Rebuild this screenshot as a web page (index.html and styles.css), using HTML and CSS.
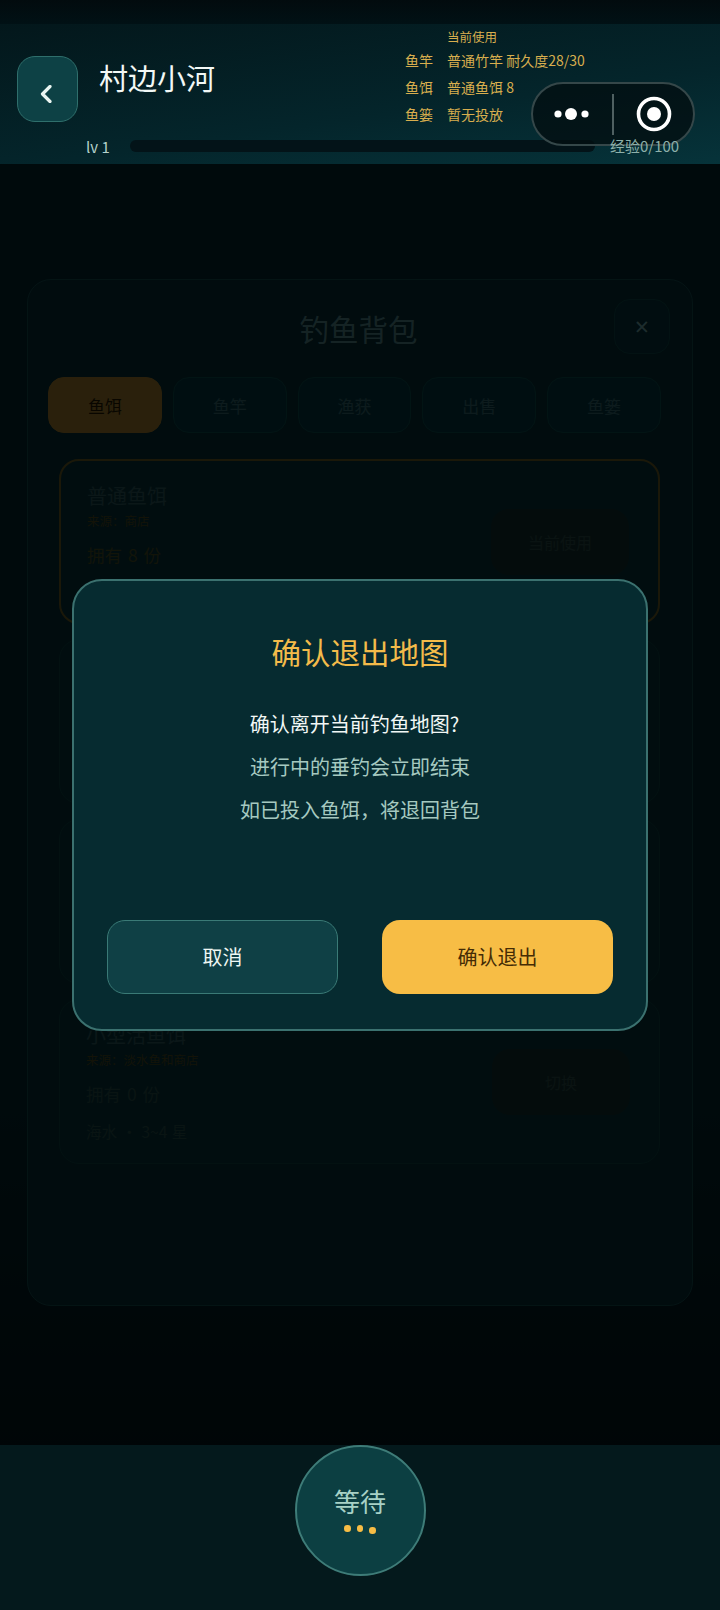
FILE: index.html
```html
<!DOCTYPE html>
<html lang="zh-CN">
<head>
    <meta charset="UTF-8">
    <meta name="viewport" content="width=device-width, initial-scale=1.0">
    <title>村边小河</title>
    <link rel="stylesheet" href="styles.css">
</head>
<body>
    <div class="page">
        <div class="status-gap"></div>

        <!-- Header -->
        <header class="map-header">
            <div class="header-row">
                <button class="back-btn">
                    <svg width="14" height="18" viewBox="0 0 14 18"><path d="M11 1.5 L3.5 9 L11 16.5" fill="none" stroke="#e9f5f1" stroke-width="3.2" stroke-linecap="round" stroke-linejoin="round"/></svg>
                </button>
                <h1 class="map-name">村边小河</h1>
                <div class="gear-info">
                    <span></span><span class="gear-head">当前使用</span>
                    <span>鱼竿</span><span>普通竹竿 耐久度28/30</span>
                    <span>鱼饵</span><span>普通鱼饵 8</span>
                    <span>鱼篓</span><span>暂无投放</span>
                </div>
            </div>
            <div class="exp-row">
                <span class="level">lv 1</span>
                <div class="exp-bar"></div>
                <span class="exp-text">经验0/100</span>
            </div>
            <div class="capsule">
                <svg class="capsule-dots" width="40" height="14" viewBox="0 0 40 14">
                    <circle cx="6" cy="7" r="3.6" fill="#fff"/>
                    <circle cx="19" cy="7" r="6" fill="#fff"/>
                    <circle cx="33" cy="7" r="3.6" fill="#fff"/>
                </svg>
                <span class="capsule-line"></span>
                <svg class="capsule-target" width="38" height="38" viewBox="0 0 38 38">
                    <circle cx="19" cy="19" r="15.5" fill="none" stroke="#fff" stroke-width="3.6"/>
                    <circle cx="19" cy="19" r="7" fill="#fff"/>
                </svg>
            </div>
        </header>

        <!-- Backpack with dialog on top -->
        <main class="map-main">
            <section class="bag">
                <h2 class="bag-title">钓鱼背包</h2>
                <button class="bag-close">×</button>
                <div class="bag-tabs">
                    <button class="bag-tab active">鱼饵</button>
                    <button class="bag-tab">鱼竿</button>
                    <button class="bag-tab">渔获</button>
                    <button class="bag-tab">出售</button>
                    <button class="bag-tab">鱼篓</button>
                </div>
                <div class="bag-list">
                    <div class="bait-card current">
                        <div class="bait-text">
                            <div class="bait-name">普通鱼饵</div>
                            <div class="bait-source">来源：商店</div>
                            <div class="bait-count">拥有 8 份</div>
                        </div>
                        <button class="bait-btn">当前使用</button>
                    </div>
                    <div class="bait-card"></div>
                    <div class="bait-card"></div>
                    <div class="bait-card">
                        <div class="bait-text">
                            <div class="bait-name">小型活鱼饵</div>
                            <div class="bait-source">来源：淡水鱼和商店</div>
                            <div class="bait-count">拥有 0 份</div>
                            <div class="bait-desc">海水 · 3~4 星</div>
                        </div>
                        <button class="bait-btn">切换</button>
                    </div>
                </div>
            </section>

            <div class="overlay">
                <div class="dialog">
                    <h3 class="dialog-title">确认退出地图</h3>
                    <p class="dialog-line first">确认离开当前钓鱼地图?</p>
                    <p class="dialog-line">进行中的垂钓会立即结束</p>
                    <p class="dialog-line">如已投入鱼饵，将退回背包</p>
                    <div class="dialog-btns">
                        <button class="dialog-btn cancel">取消</button>
                        <button class="dialog-btn confirm">确认退出</button>
                    </div>
                </div>
            </div>
        </main>

        <!-- Footer -->
        <footer class="map-footer">
            <button class="wait-btn">
                <span class="wait-text">等待</span>
                <span class="wait-dots"><i></i><i></i><i></i></span>
            </button>
        </footer>
    </div>
</body>
</html>
```

FILE: styles.css
```css
/* General Styling */
* {
    margin: 0;
    padding: 0;
    box-sizing: border-box;
}
html, body {
    height: 100%;
}
body {
    font-family: "Noto Sans CJK SC", "Noto Sans", sans-serif;
    background-color: #01090c;
    overflow: hidden;
}
button {
    font-family: inherit;
    border: none;
}
.page {
    display: flex;
    flex-direction: column;
    width: 720px;
    height: 1610px;
}
.status-gap {
    height: 24px;
    background: linear-gradient(180deg, #020b0e, #011115);
}

/* Header */
.map-header {
    position: relative;
    height: 140px;
    display: flex;
    flex-direction: column;
    background: linear-gradient(172deg, #03171b 0%, #04252b 60%, #06333a 100%);
    z-index: 2;
}
.header-row {
    height: 116px;
    display: flex;
    align-items: flex-start;
}
.back-btn {
    width: 61px;
    height: 66px;
    margin: 32px 0 0 17px;
    padding: 10px 3px 0 0;
    display: flex;
    align-items: center;
    justify-content: center;
    background-color: #0d4145;
    border: 1.5px solid #2f6f6c;
    border-radius: 18px;
}
.map-name {
    margin: 31px 0 0 21px;
    font-size: 29px;
    line-height: 44px;
    font-weight: 400;
    color: #f2f8f6;
}
.gear-info {
    margin-left: auto;
    width: 315px;
    padding-top: 2px;
    display: grid;
    grid-template-columns: 42px 1fr;
    grid-template-rows: 22.5px;
    grid-auto-rows: 27px;
    font-size: 14px;
    line-height: 22px;
    color: #d8ae4e;
}
.gear-head {
    font-size: 12.5px;
}
.exp-row {
    height: 12px;
    display: flex;
    align-items: center;
    padding-left: 86px;
}
.level {
    width: 44px;
    font-size: 15px;
    color: #b5d2cc;
}
.exp-bar {
    width: 465px;
    height: 12px;
    background-color: #031318;
    border-radius: 6px;
}
.exp-text {
    position: relative;
    top: -1px;
    z-index: 4;
    margin-left: 15px;
    font-size: 15px;
    color: #8db0aa;
}

/* Wechat capsule lies over the header */
.capsule {
    position: absolute;
    left: 531px;
    top: 58px;
    width: 164px;
    height: 64px;
    display: flex;
    align-items: center;
    background-color: rgba(2, 14, 17, 0.78);
    border: 2px solid #354749;
    border-radius: 32px;
    z-index: 3;
}
.capsule-dots {
    margin-left: 19px;
}
.capsule-line {
    width: 2px;
    height: 41px;
    margin-left: 20px;
    background-color: #4f6061;
}
.capsule-target {
    margin-left: 21px;
}

/* Backpack */
.map-main {
    position: relative;
    flex: 1;
    padding: 115px 0 0 27px;
    background: linear-gradient(180deg, #03303a 0%, #03303a 70%, #011a20 100%);
}
.bag {
    position: relative;
    width: 666px;
    height: 1027px;
    padding: 26px 31px 0 20px;
    background-color: #053740;
    border: 1px solid #165a5e;
    border-radius: 24px;
}
.bag-title {
    height: 44px;
    margin-left: 8px;
    text-align: center;
    font-size: 29.5px;
    line-height: 44px;
    font-weight: 400;
    color: #5f9ea5;
}
.bag-close {
    position: absolute;
    top: 19px;
    right: 22px;
    width: 56px;
    height: 55px;
    padding-bottom: 2px;
    background-color: #053c48;
    border: 1px solid #0f5558;
    border-radius: 16px;
    font-family: "Noto Sans", sans-serif;
    font-size: 25px;
    color: #86c8cc;
}
.bag-tabs {
    display: flex;
    gap: 11px;
    margin-top: 27px;
}
.bag-tab {
    width: 114px;
    height: 56px;
    background-color: #044350;
    border: 1px solid #0c5a5c;
    border-radius: 16px;
    font-size: 17px;
    color: #3c7c85;
}
.bag-tab.active {
    background-color: #c09436;
    border-color: #c09436;
    color: #2a1e04;
}
.bag-list {
    display: flex;
    flex-direction: column;
    gap: 15px;
    margin: 26px 0 0 11px;
}
.bait-card {
    width: 601px;
    height: 165px;
    display: flex;
    align-items: center;
    justify-content: space-between;
    padding: 0 29px 0 26px;
    background-color: #063e46;
    border: 1.5px solid #0f4e50;
    border-radius: 20px;
}
.bait-card.current {
    border: 2px solid #7c6f2c;
}
.bait-text {
    align-self: flex-start;
    padding-top: 21px;
}
.bait-name {
    font-size: 20px;
    line-height: 28px;
    color: #34696f;
}
.bait-source {
    margin-top: 2px;
    font-size: 12.5px;
    line-height: 18px;
    color: #565626;
}
.bait-count {
    margin-top: 13px;
    font-size: 17.5px;
    line-height: 24px;
    word-spacing: 2px;
    color: #2c5c58;
}
.current .bait-count {
    color: #525a2c;
}
.bait-desc {
    margin-top: 13px;
    font-size: 15.5px;
    line-height: 24px;
    word-spacing: 1px;
    color: #2c5c58;
}
.bait-btn {
    width: 138px;
    height: 66px;
    background-color: #153a38;
    border-radius: 18px;
    font-size: 16px;
    color: #2f5854;
}

/* Dialog */
.overlay {
    position: absolute;
    inset: 0;
    display: flex;
    align-items: center;
    justify-content: center;
    background-color: rgba(0, 0, 0, 0.78);
}
.dialog {
    width: 576px;
    height: 452px;
    display: flex;
    flex-direction: column;
    padding: 48px 33px 35px;
    background-color: #062b30;
    border: 2px solid #3b716f;
    border-radius: 30px;
    text-align: center;
}
.dialog-title {
    font-size: 29.5px;
    line-height: 44px;
    font-weight: 400;
    color: #f3bb4a;
}
.dialog-line {
    font-size: 20px;
    line-height: 43px;
    color: #a5c9c0;
}
.dialog-line.first {
    margin-top: 29px;
    padding-right: 11px;
    color: #f2f8f6;
}
.dialog-btns {
    margin-top: auto;
    display: flex;
    justify-content: space-between;
}
.dialog-btn {
    width: 231px;
    height: 74px;
    border-radius: 18px;
    font-size: 20px;
}
.dialog-btn.cancel {
    background-color: #0f4045;
    border: 1.5px solid #3a7a76;
    color: #eef7f3;
}
.dialog-btn.confirm {
    background-color: #f7bd45;
    color: #452c05;
}

/* Footer */
.map-footer {
    height: 165px;
    display: flex;
    justify-content: center;
    background-color: #04191c;
}
.wait-btn {
    width: 131px;
    height: 131px;
    display: flex;
    flex-direction: column;
    align-items: center;
    padding-top: 33px;
    background-color: #0c3f42;
    border: 2px solid #3e7c78;
    border-radius: 50%;
}
.wait-text {
    font-size: 26px;
    line-height: 42px;
    color: #a7d1c6;
}
.wait-dots {
    display: flex;
    gap: 6px;
    margin-top: 3px;
}
.wait-dots i {
    width: 6.5px;
    height: 6.5px;
    background-color: #f7bd45;
    border-radius: 50%;
}
.wait-dots i:last-child {
    transform: translateY(2px);
}
```
